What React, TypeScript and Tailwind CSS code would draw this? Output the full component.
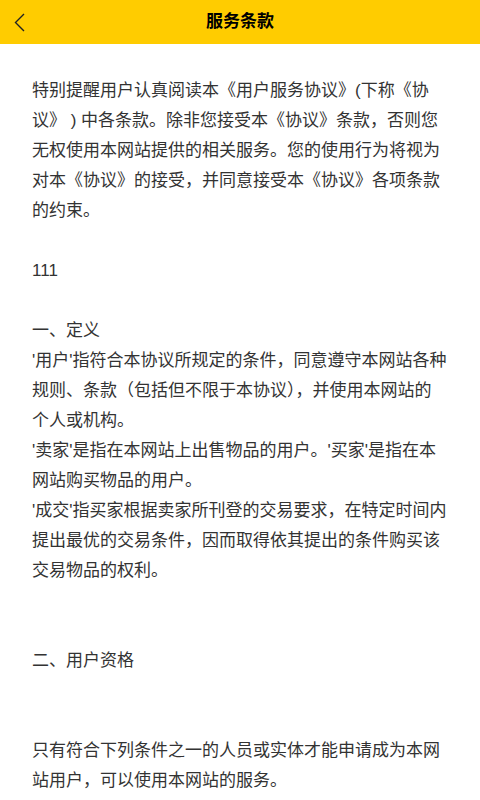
const font = { fontFamily: '"Liberation Sans", "Noto Sans CJK SC", sans-serif' }

function Header() {
  return (
    <div className="h-[44px] bg-[#ffcc00] flex items-center relative">
      <button className="w-[44px] h-[44px] flex items-center pl-[14px]">
        <svg width="12" height="19" viewBox="0 0 12 19" fill="none">
          <path d="M10 1 L1.5 9.5 L10 18" stroke="#222" strokeWidth="1.4" />
        </svg>
      </button>
      <div className="absolute inset-0 flex items-center justify-center pointer-events-none">
        <span className="text-[17px] font-bold text-black">服务条款</span>
      </div>
    </div>
  )
}

export default function App() {
  const lines = [
    '特别提醒用户认真阅读本《用户服务协议》(下称《协议》 ) 中各条款。除非您接受本《协议》条款，否则您无权使用本网站提供的相关服务。您的使用行为将视为对本《协议》的接受，并同意接受本《协议》各项条款的约束。',
    '',
    '111',
    '',
    '一、定义',
    "'用户'指符合本协议所规定的条件，同意遵守本网站各种规则、条款（包括但不限于本协议），并使用本网站的个人或机构。",
    "'卖家'是指在本网站上出售物品的用户。'买家'是指在本网站购买物品的用户。",
    "'成交'指买家根据卖家所刊登的交易要求，在特定时间内提出最优的交易条件，因而取得依其提出的条件购买该交易物品的权利。",
    '',
    '',
    '二、用户资格',
    '',
    '',
    '只有符合下列条件之一的人员或实体才能申请成为本网站用户，可以使用本网站的服务。',
  ]

  return (
    <div className="w-[480px] h-[800px] bg-white overflow-hidden" style={font}>
      <Header />
      <div className="px-8 pt-[32px] text-[17px] leading-[30px] text-[#333]">
        {lines.map((l, i) =>
          l ? <p key={i}>{l}</p> : <div key={i} className="h-[30px]" />,
        )}
      </div>
    </div>
  )
}
